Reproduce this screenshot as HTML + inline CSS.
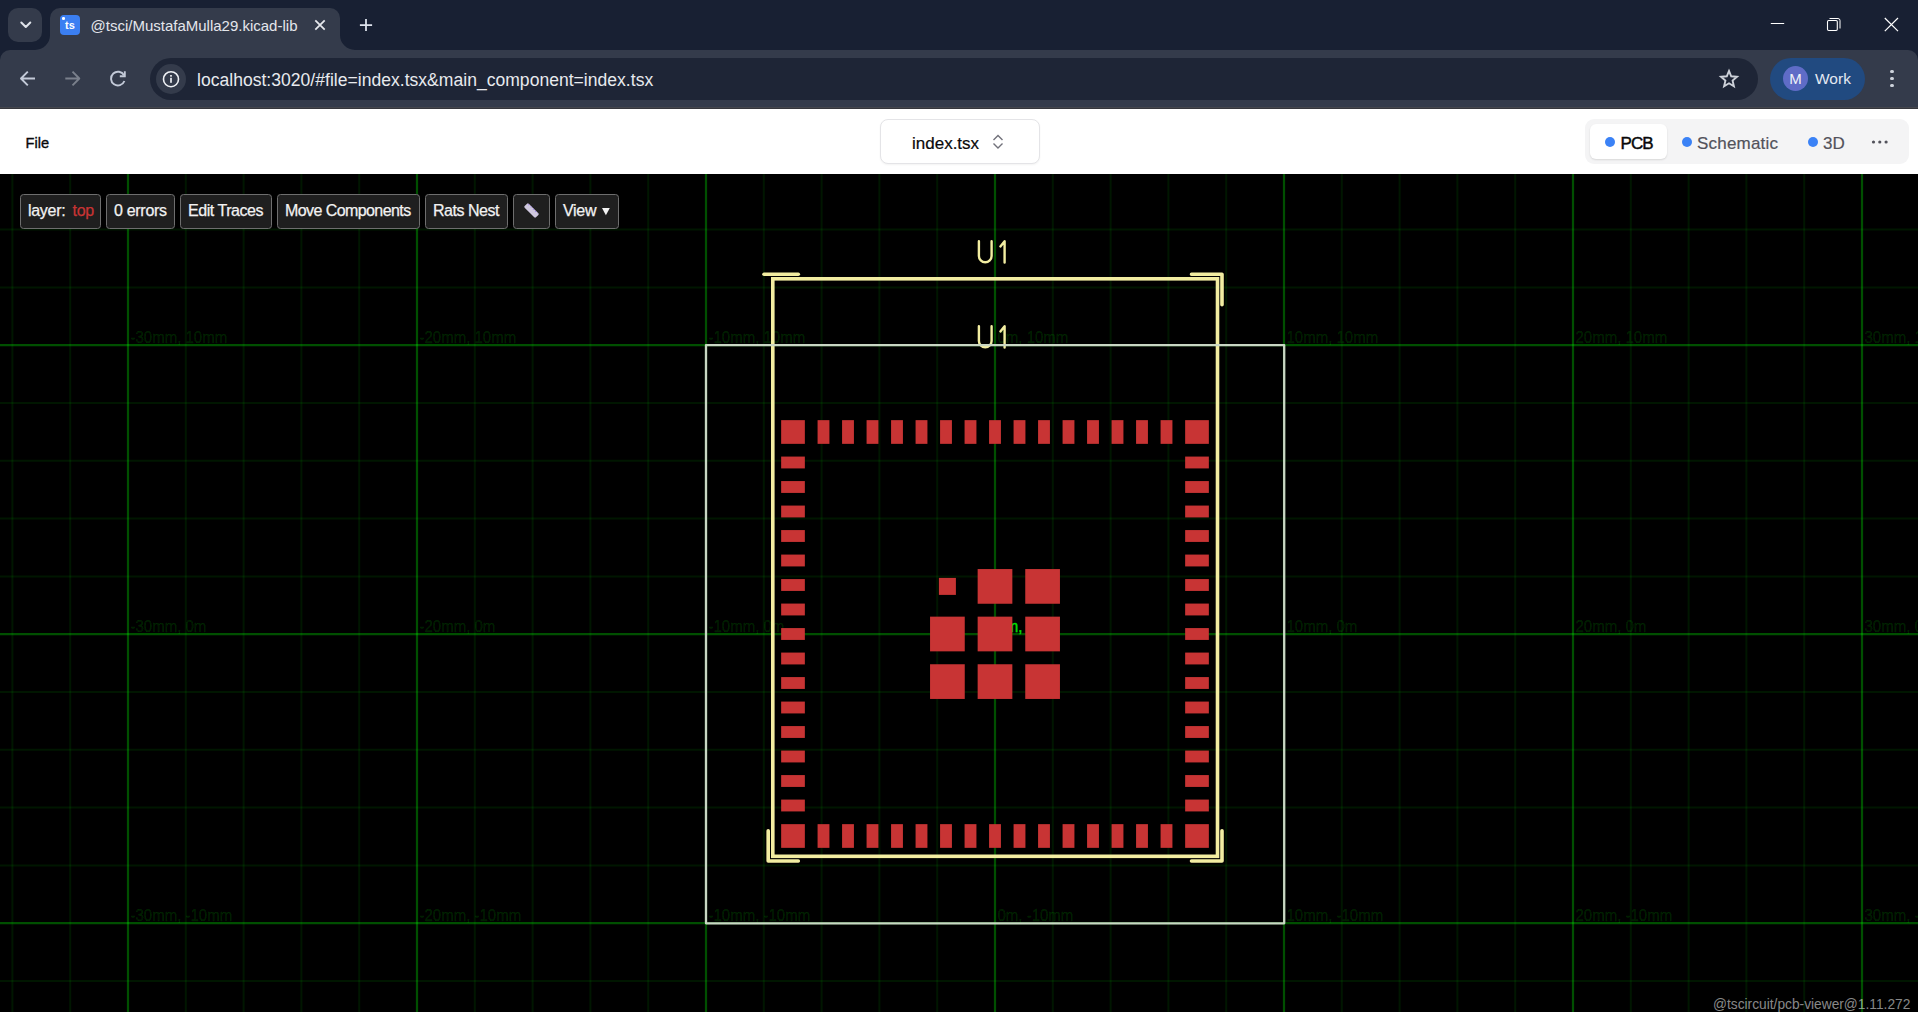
<!DOCTYPE html>
<html><head><meta charset="utf-8">
<style>
*{box-sizing:border-box;margin:0;padding:0}
html,body{width:1918px;height:1012px;overflow:hidden;background:#000;font-family:"Liberation Sans",sans-serif}
.abs{position:absolute}
#tabstrip{position:absolute;left:0;top:0;width:1918px;height:60px;background:#182033}
#toolbar{position:absolute;left:0;top:50px;width:1918px;height:59px;background:#343b4b;border-top-left-radius:10px;border-top-right-radius:10px}
#header{position:absolute;left:0;top:109px;width:1918px;height:65px;background:#fff}
#canvas{position:absolute;left:0;top:174px;width:1918px;height:838px;background:#000}
svg text{font-family:"Liberation Sans",sans-serif}
.mn{stroke:rgba(0,255,0,0.085);stroke-width:2}
.mj{stroke:rgba(0,255,0,0.31);stroke-width:2.2}
.lbl{fill:rgba(0,255,0,0.115);stroke:rgba(0,255,0,0.115);stroke-width:0.4px;font-size:17px}
.lbl0{fill:#00e000;stroke:#00e000;stroke-width:0.4px;font-size:17px}
.btn{position:absolute;top:194px;height:35px;background:#1f1f1f;border:1.5px solid #6e6e6e;border-radius:3.5px;color:#f2f2f2;font-size:16px;letter-spacing:-0.3px;-webkit-text-stroke:0.25px;line-height:32px;padding:0 7px;white-space:nowrap}
</style></head><body>
<div id="tabstrip"></div>
<!-- tab search button -->
<div class="abs" style="left:8px;top:8px;width:34px;height:34px;border-radius:10px;background:#343b4b"></div>
<svg class="abs" style="left:8px;top:8px" width="34" height="34"><path d="M13.3 14.5 L17.8 19 L22.3 14.5" fill="none" stroke="#dfe3ea" stroke-width="2" stroke-linecap="round" stroke-linejoin="round"/></svg>
<!-- active tab -->
<svg class="abs" style="left:0;top:0" width="400" height="51">
<path d="M35 50 A15 15 0 0 0 50 35 L50 18 A10 10 0 0 1 60 8 L330 8 A10 10 0 0 1 340 18 L340 35 A15 15 0 0 0 355 50 Z" fill="#343b4b"/>
</svg>
<div class="abs" style="left:60px;top:15px;width:20px;height:20px;border-radius:4px;background:#3b7ff2"></div>
<div class="abs" style="left:65px;top:19.2px;color:#fff;font-size:11px;font-weight:bold;line-height:12px">ts</div>
<div class="abs" style="left:62px;top:17.2px;width:2.6px;height:2.6px;border-radius:1.3px;background:#fff"></div>
<div class="abs" style="left:90.5px;top:17px;color:#e4e6eb;font-size:15px;line-height:18px;white-space:nowrap">@tsci/MustafaMulla29.kicad-lib</div>
<svg class="abs" style="left:310px;top:15px" width="20" height="20"><path d="M5.3 5.3 L14.7 14.7 M14.7 5.3 L5.3 14.7" stroke="#e6e8ed" stroke-width="1.75"/></svg>
<svg class="abs" style="left:356px;top:15px" width="20" height="20"><path d="M10 3.9 V16.1 M3.9 10 H16.1" stroke="#dfe4ee" stroke-width="1.75"/></svg>
<!-- window controls -->
<svg class="abs" style="left:1760px;top:0" width="158" height="50">
<path d="M10.8 23.5 H24.2" stroke="#fff" stroke-width="1"/>
<rect x="67.5" y="20.5" width="9.8" height="10" rx="1.2" fill="none" stroke="#fff" stroke-width="1.1"/>
<path d="M69.5 18.5 H78 Q80 18.5 80 20.5 V28.5" fill="none" stroke="#fff" stroke-width="1"/>
<path d="M124.8 18 L138 31.2 M138 18 L124.8 31.2" stroke="#fff" stroke-width="1.2"/>
</svg>
<div id="toolbar"></div>
<div class="abs" style="left:0;top:107px;width:1918px;height:1px;background:#44464d"></div>
<div class="abs" style="left:0;top:108px;width:1918px;height:1px;background:#36373d"></div>
<svg class="abs" style="left:0;top:50px" width="200" height="58">
<path d="M21 28.5 H35 M27.8 21.6 L21 28.5 L27.8 35.4" fill="none" stroke="#c3cad8" stroke-width="1.9" stroke-linejoin="round"/>
<path d="M65.3 28.5 H79.3 M72.5 21.6 L79.3 28.5 L72.5 35.4" fill="none" stroke="#7a808c" stroke-width="1.9" stroke-linejoin="round"/>
<path d="M124 25.3 A6.9 6.9 0 1 0 124.4 31" fill="none" stroke="#c3cad8" stroke-width="1.9"/>
<path d="M124.8 21.2 V26.2 H119.8" fill="none" stroke="#c3cad8" stroke-width="1.9"/>
</svg>
<!-- omnibox -->
<div class="abs" style="left:150px;top:58px;width:1608px;height:42px;border-radius:21px;background:#1e2536"></div>
<div class="abs" style="left:156px;top:64px;width:30px;height:30px;border-radius:15px;background:#343b4b"></div>
<svg class="abs" style="left:156px;top:64px" width="30" height="30">
<circle cx="15" cy="15.2" r="7.5" fill="none" stroke="#eef0f4" stroke-width="1.6"/>
<rect x="14.15" y="13.8" width="1.7" height="5" fill="#eef0f4"/><rect x="14.15" y="11" width="1.7" height="1.7" fill="#eef0f4"/>
</svg>
<div class="abs" style="left:197px;top:69px;color:#e8eaee;font-size:17.55px;letter-spacing:0.02px;line-height:22px;white-space:nowrap">localhost:3020/#file=index.tsx&amp;main_component=index.tsx</div>
<svg class="abs" style="left:1716.5px;top:67px" width="24" height="24"><path d="M12 3.9 L14.2 9.3 L20 9.8 L15.6 13.6 L16.9 19.3 L12 16.3 L7.1 19.3 L8.4 13.6 L4 9.8 L9.8 9.3 Z" fill="none" stroke="#cdd1d9" stroke-width="1.9" stroke-linejoin="miter"/></svg>
<div class="abs" style="left:1770px;top:58px;width:95px;height:42px;border-radius:21px;background:#214a80"></div>
<div class="abs" style="left:1783px;top:66px;width:25px;height:25px;border-radius:12.5px;background:#5f6cc7"></div>
<div class="abs" style="left:1783px;top:67px;width:25px;text-align:center;color:#f0f2f8;font-size:15px;line-height:23px">M</div>
<div class="abs" style="left:1815px;top:68px;color:#e3e8f2;font-size:15.5px;line-height:22px">Work</div>
<div class="abs" style="left:1890.4px;top:69.6px;width:3.8px;height:3.8px;border-radius:1.9px;background:#cdd2db"></div>
<div class="abs" style="left:1890.4px;top:76.6px;width:3.8px;height:3.8px;border-radius:1.9px;background:#cdd2db"></div>
<div class="abs" style="left:1890.4px;top:83.6px;width:3.8px;height:3.8px;border-radius:1.9px;background:#cdd2db"></div>
<div id="header"></div>
<div class="abs" style="left:25.5px;top:134px;color:#09090b;font-size:14.6px;line-height:18px;-webkit-text-stroke:0.35px #09090b">File</div>
<div class="abs" style="left:880px;top:119px;width:160px;height:45px;border:1px solid #e4e4e7;border-radius:8px;background:#fff;box-shadow:0 1px 2px rgba(0,0,0,0.05)"></div>
<div class="abs" style="left:912px;top:134px;color:#09090b;font-size:17px;line-height:20px;-webkit-text-stroke:0.2px #09090b">index.tsx</div>
<svg class="abs" style="left:988px;top:130px" width="20" height="24"><path d="M5.5 10 L10 5.5 L14.5 10 M5.5 13.5 L10 18 L14.5 13.5" fill="none" stroke="#71717a" stroke-width="1.4"/></svg>
<div class="abs" style="left:1585px;top:119px;width:324px;height:45px;border-radius:9px;background:#f4f4f5"></div>
<div class="abs" style="left:1590px;top:124px;width:77px;height:35px;border-radius:6px;background:#fff;box-shadow:0 1px 2px rgba(0,0,0,0.12)"></div>
<div class="abs" style="left:1605px;top:137px;width:10px;height:10px;border-radius:5px;background:#3b82f6"></div>
<div class="abs" style="left:1620.5px;top:134px;color:#09090b;font-size:17px;line-height:20px;letter-spacing:-0.9px;-webkit-text-stroke:0.45px #09090b">PCB</div>
<div class="abs" style="left:1682px;top:137px;width:10px;height:10px;border-radius:5px;background:#3b82f6"></div>
<div class="abs" style="left:1697px;top:134px;color:#52525b;font-size:17px;line-height:20px;letter-spacing:0.2px;-webkit-text-stroke:0.2px #52525b">Schematic</div>
<div class="abs" style="left:1808px;top:137px;width:10px;height:10px;border-radius:5px;background:#3b82f6"></div>
<div class="abs" style="left:1823px;top:134px;color:#52525b;font-size:17px;line-height:20px;-webkit-text-stroke:0.2px #52525b">3D</div>
<svg class="abs" style="left:1868px;top:132px" width="24" height="20"><circle cx="5.5" cy="10" r="1.6" fill="#52525b"/><circle cx="11.8" cy="10" r="1.6" fill="#52525b"/><circle cx="18.1" cy="10" r="1.6" fill="#52525b"/></svg>
<div id="canvas">
<svg width="1918" height="838" style="position:absolute;left:0;top:0">
<line x1="12.4" y1="0" x2="12.4" y2="838" class="mn"/>
<line x1="70.2" y1="0" x2="70.2" y2="838" class="mn"/>
<line x1="185.8" y1="0" x2="185.8" y2="838" class="mn"/>
<line x1="243.6" y1="0" x2="243.6" y2="838" class="mn"/>
<line x1="301.4" y1="0" x2="301.4" y2="838" class="mn"/>
<line x1="359.2" y1="0" x2="359.2" y2="838" class="mn"/>
<line x1="474.8" y1="0" x2="474.8" y2="838" class="mn"/>
<line x1="532.6" y1="0" x2="532.6" y2="838" class="mn"/>
<line x1="590.4" y1="0" x2="590.4" y2="838" class="mn"/>
<line x1="648.2" y1="0" x2="648.2" y2="838" class="mn"/>
<line x1="763.8" y1="0" x2="763.8" y2="838" class="mn"/>
<line x1="821.6" y1="0" x2="821.6" y2="838" class="mn"/>
<line x1="879.4" y1="0" x2="879.4" y2="838" class="mn"/>
<line x1="937.2" y1="0" x2="937.2" y2="838" class="mn"/>
<line x1="1052.8" y1="0" x2="1052.8" y2="838" class="mn"/>
<line x1="1110.6" y1="0" x2="1110.6" y2="838" class="mn"/>
<line x1="1168.4" y1="0" x2="1168.4" y2="838" class="mn"/>
<line x1="1226.2" y1="0" x2="1226.2" y2="838" class="mn"/>
<line x1="1341.8" y1="0" x2="1341.8" y2="838" class="mn"/>
<line x1="1399.6" y1="0" x2="1399.6" y2="838" class="mn"/>
<line x1="1457.4" y1="0" x2="1457.4" y2="838" class="mn"/>
<line x1="1515.2" y1="0" x2="1515.2" y2="838" class="mn"/>
<line x1="1630.8" y1="0" x2="1630.8" y2="838" class="mn"/>
<line x1="1688.6" y1="0" x2="1688.6" y2="838" class="mn"/>
<line x1="1746.4" y1="0" x2="1746.4" y2="838" class="mn"/>
<line x1="1804.2" y1="0" x2="1804.2" y2="838" class="mn"/>
<line x1="0" y1="55.6" x2="1918" y2="55.6" class="mn"/>
<line x1="0" y1="113.4" x2="1918" y2="113.4" class="mn"/>
<line x1="0" y1="229" x2="1918" y2="229" class="mn"/>
<line x1="0" y1="286.8" x2="1918" y2="286.8" class="mn"/>
<line x1="0" y1="344.6" x2="1918" y2="344.6" class="mn"/>
<line x1="0" y1="402.4" x2="1918" y2="402.4" class="mn"/>
<line x1="0" y1="518" x2="1918" y2="518" class="mn"/>
<line x1="0" y1="575.8" x2="1918" y2="575.8" class="mn"/>
<line x1="0" y1="633.6" x2="1918" y2="633.6" class="mn"/>
<line x1="0" y1="691.4" x2="1918" y2="691.4" class="mn"/>
<line x1="0" y1="807" x2="1918" y2="807" class="mn"/>
<line x1="128" y1="0" x2="128" y2="838" class="mj"/>
<line x1="417" y1="0" x2="417" y2="838" class="mj"/>
<line x1="706" y1="0" x2="706" y2="838" class="mj"/>
<line x1="995" y1="0" x2="995" y2="838" class="mj"/>
<line x1="1284" y1="0" x2="1284" y2="838" class="mj"/>
<line x1="1573" y1="0" x2="1573" y2="838" class="mj"/>
<line x1="1862" y1="0" x2="1862" y2="838" class="mj"/>
<line x1="0" y1="171.2" x2="1918" y2="171.2" class="mj"/>
<line x1="0" y1="460.2" x2="1918" y2="460.2" class="mj"/>
<line x1="0" y1="749.2" x2="1918" y2="749.2" class="mj"/>
<text x="130.5" y="168.7" class="lbl" textLength="96.68" lengthAdjust="spacingAndGlyphs">-30mm, 10mm</text>
<text x="130.5" y="457.7" class="lbl" textLength="75.84" lengthAdjust="spacingAndGlyphs">-30mm, 0m</text>
<text x="130.5" y="746.7" class="lbl" textLength="101.67" lengthAdjust="spacingAndGlyphs">-30mm, -10mm</text>
<text x="419.5" y="168.7" class="lbl" textLength="96.68" lengthAdjust="spacingAndGlyphs">-20mm, 10mm</text>
<text x="419.5" y="457.7" class="lbl" textLength="75.84" lengthAdjust="spacingAndGlyphs">-20mm, 0m</text>
<text x="419.5" y="746.7" class="lbl" textLength="101.67" lengthAdjust="spacingAndGlyphs">-20mm, -10mm</text>
<text x="708.5" y="168.7" class="lbl" textLength="96.68" lengthAdjust="spacingAndGlyphs">-10mm, 10mm</text>
<text x="708.5" y="457.7" class="lbl" textLength="75.84" lengthAdjust="spacingAndGlyphs">-10mm, 0m</text>
<text x="708.5" y="746.7" class="lbl" textLength="101.67" lengthAdjust="spacingAndGlyphs">-10mm, -10mm</text>
<text x="997.5" y="168.7" class="lbl" textLength="70.85" lengthAdjust="spacingAndGlyphs">0m, 10mm</text>
<text x="997.5" y="457.7" class="lbl0" textLength="50.01" lengthAdjust="spacingAndGlyphs">0m, 0m</text>
<text x="997.5" y="746.7" class="lbl" textLength="75.84" lengthAdjust="spacingAndGlyphs">0m, -10mm</text>
<text x="1286.5" y="168.7" class="lbl" textLength="91.68" lengthAdjust="spacingAndGlyphs">10mm, 10mm</text>
<text x="1286.5" y="457.7" class="lbl" textLength="70.85" lengthAdjust="spacingAndGlyphs">10mm, 0m</text>
<text x="1286.5" y="746.7" class="lbl" textLength="96.68" lengthAdjust="spacingAndGlyphs">10mm, -10mm</text>
<text x="1575.5" y="168.7" class="lbl" textLength="91.68" lengthAdjust="spacingAndGlyphs">20mm, 10mm</text>
<text x="1575.5" y="457.7" class="lbl" textLength="70.85" lengthAdjust="spacingAndGlyphs">20mm, 0m</text>
<text x="1575.5" y="746.7" class="lbl" textLength="96.68" lengthAdjust="spacingAndGlyphs">20mm, -10mm</text>
<text x="1864.5" y="168.7" class="lbl" textLength="91.68" lengthAdjust="spacingAndGlyphs">30mm, 10mm</text>
<text x="1864.5" y="457.7" class="lbl" textLength="70.85" lengthAdjust="spacingAndGlyphs">30mm, 0m</text>
<text x="1864.5" y="746.7" class="lbl" textLength="96.68" lengthAdjust="spacingAndGlyphs">30mm, -10mm</text>
<rect x="781.15" y="246.15" width="23.7" height="23.7" fill="#c83434"/>
<rect x="781.15" y="650.15" width="23.7" height="23.7" fill="#c83434"/>
<rect x="1185.15" y="246.15" width="23.7" height="23.7" fill="#c83434"/>
<rect x="1185.15" y="650.15" width="23.7" height="23.7" fill="#c83434"/>
<rect x="817.58" y="246.15" width="11.85" height="23.7" fill="#c83434"/>
<rect x="817.58" y="650.15" width="11.85" height="23.7" fill="#c83434"/>
<rect x="781.15" y="282.57" width="23.7" height="11.85" fill="#c83434"/>
<rect x="1185.15" y="282.57" width="23.7" height="11.85" fill="#c83434"/>
<rect x="842.08" y="246.15" width="11.85" height="23.7" fill="#c83434"/>
<rect x="842.08" y="650.15" width="11.85" height="23.7" fill="#c83434"/>
<rect x="781.15" y="307.07" width="23.7" height="11.85" fill="#c83434"/>
<rect x="1185.15" y="307.07" width="23.7" height="11.85" fill="#c83434"/>
<rect x="866.58" y="246.15" width="11.85" height="23.7" fill="#c83434"/>
<rect x="866.58" y="650.15" width="11.85" height="23.7" fill="#c83434"/>
<rect x="781.15" y="331.57" width="23.7" height="11.85" fill="#c83434"/>
<rect x="1185.15" y="331.57" width="23.7" height="11.85" fill="#c83434"/>
<rect x="891.08" y="246.15" width="11.85" height="23.7" fill="#c83434"/>
<rect x="891.08" y="650.15" width="11.85" height="23.7" fill="#c83434"/>
<rect x="781.15" y="356.08" width="23.7" height="11.85" fill="#c83434"/>
<rect x="1185.15" y="356.08" width="23.7" height="11.85" fill="#c83434"/>
<rect x="915.58" y="246.15" width="11.85" height="23.7" fill="#c83434"/>
<rect x="915.58" y="650.15" width="11.85" height="23.7" fill="#c83434"/>
<rect x="781.15" y="380.58" width="23.7" height="11.85" fill="#c83434"/>
<rect x="1185.15" y="380.58" width="23.7" height="11.85" fill="#c83434"/>
<rect x="940.08" y="246.15" width="11.85" height="23.7" fill="#c83434"/>
<rect x="940.08" y="650.15" width="11.85" height="23.7" fill="#c83434"/>
<rect x="781.15" y="405.08" width="23.7" height="11.85" fill="#c83434"/>
<rect x="1185.15" y="405.08" width="23.7" height="11.85" fill="#c83434"/>
<rect x="964.58" y="246.15" width="11.85" height="23.7" fill="#c83434"/>
<rect x="964.58" y="650.15" width="11.85" height="23.7" fill="#c83434"/>
<rect x="781.15" y="429.58" width="23.7" height="11.85" fill="#c83434"/>
<rect x="1185.15" y="429.58" width="23.7" height="11.85" fill="#c83434"/>
<rect x="989.08" y="246.15" width="11.85" height="23.7" fill="#c83434"/>
<rect x="989.08" y="650.15" width="11.85" height="23.7" fill="#c83434"/>
<rect x="781.15" y="454.08" width="23.7" height="11.85" fill="#c83434"/>
<rect x="1185.15" y="454.08" width="23.7" height="11.85" fill="#c83434"/>
<rect x="1013.58" y="246.15" width="11.85" height="23.7" fill="#c83434"/>
<rect x="1013.58" y="650.15" width="11.85" height="23.7" fill="#c83434"/>
<rect x="781.15" y="478.58" width="23.7" height="11.85" fill="#c83434"/>
<rect x="1185.15" y="478.58" width="23.7" height="11.85" fill="#c83434"/>
<rect x="1038.08" y="246.15" width="11.85" height="23.7" fill="#c83434"/>
<rect x="1038.08" y="650.15" width="11.85" height="23.7" fill="#c83434"/>
<rect x="781.15" y="503.08" width="23.7" height="11.85" fill="#c83434"/>
<rect x="1185.15" y="503.08" width="23.7" height="11.85" fill="#c83434"/>
<rect x="1062.58" y="246.15" width="11.85" height="23.7" fill="#c83434"/>
<rect x="1062.58" y="650.15" width="11.85" height="23.7" fill="#c83434"/>
<rect x="781.15" y="527.58" width="23.7" height="11.85" fill="#c83434"/>
<rect x="1185.15" y="527.58" width="23.7" height="11.85" fill="#c83434"/>
<rect x="1087.08" y="246.15" width="11.85" height="23.7" fill="#c83434"/>
<rect x="1087.08" y="650.15" width="11.85" height="23.7" fill="#c83434"/>
<rect x="781.15" y="552.08" width="23.7" height="11.85" fill="#c83434"/>
<rect x="1185.15" y="552.08" width="23.7" height="11.85" fill="#c83434"/>
<rect x="1111.58" y="246.15" width="11.85" height="23.7" fill="#c83434"/>
<rect x="1111.58" y="650.15" width="11.85" height="23.7" fill="#c83434"/>
<rect x="781.15" y="576.58" width="23.7" height="11.85" fill="#c83434"/>
<rect x="1185.15" y="576.58" width="23.7" height="11.85" fill="#c83434"/>
<rect x="1136.08" y="246.15" width="11.85" height="23.7" fill="#c83434"/>
<rect x="1136.08" y="650.15" width="11.85" height="23.7" fill="#c83434"/>
<rect x="781.15" y="601.08" width="23.7" height="11.85" fill="#c83434"/>
<rect x="1185.15" y="601.08" width="23.7" height="11.85" fill="#c83434"/>
<rect x="1160.58" y="246.15" width="11.85" height="23.7" fill="#c83434"/>
<rect x="1160.58" y="650.15" width="11.85" height="23.7" fill="#c83434"/>
<rect x="781.15" y="625.58" width="23.7" height="11.85" fill="#c83434"/>
<rect x="1185.15" y="625.58" width="23.7" height="11.85" fill="#c83434"/>
<rect x="977.65" y="395.05" width="34.7" height="34.7" fill="#c83434"/>
<rect x="1025.25" y="395.05" width="34.7" height="34.7" fill="#c83434"/>
<rect x="930.05" y="442.65" width="34.7" height="34.7" fill="#c83434"/>
<rect x="977.65" y="442.65" width="34.7" height="34.7" fill="#c83434"/>
<rect x="1025.25" y="442.65" width="34.7" height="34.7" fill="#c83434"/>
<rect x="930.05" y="490.25" width="34.7" height="34.7" fill="#c83434"/>
<rect x="977.65" y="490.25" width="34.7" height="34.7" fill="#c83434"/>
<rect x="1025.25" y="490.25" width="34.7" height="34.7" fill="#c83434"/>
<rect x="938.9" y="403.9" width="17" height="17" fill="#c83434"/>
<g transform="translate(0,-174)" fill="none" stroke="#f2eda1" stroke-width="3.6" stroke-linecap="round" stroke-linejoin="round">
<rect x="772.8" y="278.8" width="444.7" height="577.5" stroke-linejoin="miter"/>
<path d="M764 274.2 H798.3"/>
<path d="M1191.5 274.2 H1222 V304.7"/>
<path d="M768.2 830.7 V861 H798.3"/>
<path d="M1222 830.7 V861 H1191.5"/>
</g>
<g transform="translate(0,-174)" fill="none" stroke="#f2eda1" stroke-width="2.4" stroke-linecap="round" stroke-linejoin="round">
<path d="M978.9 241.2 V255.9 A6.35 6.35 0 0 0 991.6 255.9 V241.2 M1000.4 246.4 L1004.6 241.2 V262.6"/>
<path d="M978.9 326.2 V340.9 A6.35 6.35 0 0 0 991.6 340.9 V326.2 M1000.4 331.4 L1004.6 326.2 V347.6"/>
</g>
<rect x="706" y="171.10000000000002" width="578.2" height="578.2" fill="none" stroke="#c9d6c3" stroke-width="2.3" stroke-linejoin="round"/>
</svg>
</div>
<div class="btn" style="left:20px;width:81px">layer: <span style="color:#c83434;margin-left:3px">top</span></div>
<div class="btn" style="left:106px;width:69px">0 errors</div>
<div class="btn" style="left:180px;width:92px;letter-spacing:-0.45px">Edit Traces</div>
<div class="btn" style="left:277px;width:143px;letter-spacing:-0.58px">Move Components</div>
<div class="btn" style="left:425px;width:83px;letter-spacing:-0.48px">Rats Nest</div>
<div class="btn" style="left:513px;width:37px"></div>
<svg class="abs" style="left:513px;top:194px" width="37" height="35"><g transform="translate(18.5 16.5) rotate(45)"><rect x="-8" y="-2.9" width="16" height="5.8" rx="1.2" fill="#cfc8de"/><path d="M-6.5 -2.2 H6.5" stroke="#9f7ff5" stroke-width="1" stroke-dasharray="1 2.2"/></g></svg>
<div class="btn" style="left:555px;width:64px">View</div>
<svg class="abs" style="left:600px;top:205px" width="12" height="12"><path d="M2 3 H9.8 L5.9 10.2 Z" fill="#f2f2f2"/></svg>
<div class="abs" style="left:1713px;top:996px;color:rgba(255,255,255,0.54);font-size:13.75px;line-height:18px;white-space:nowrap">@tscircuit/pcb-viewer@1.11.272</div>
</body></html>
